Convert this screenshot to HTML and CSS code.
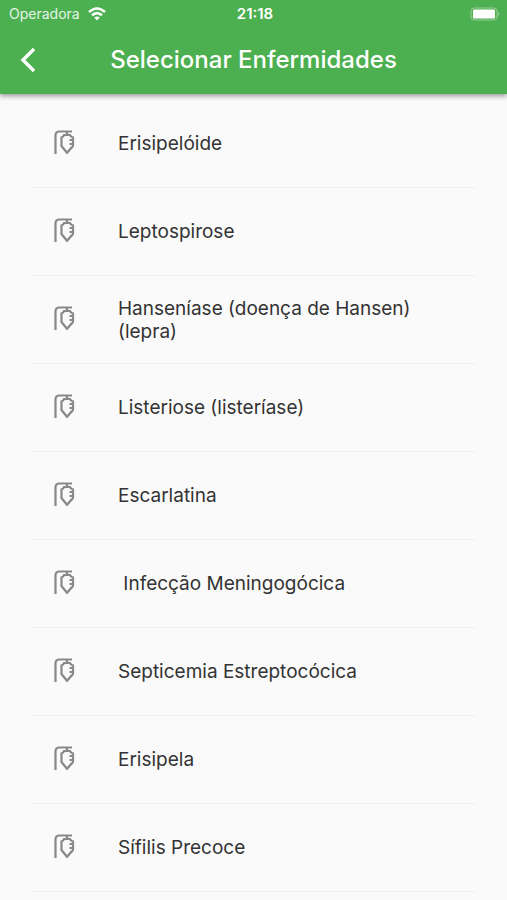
FILE: index.html
```html
<!DOCTYPE html>
<html lang="pt-BR">
<head>
<meta charset="utf-8">
<meta name="viewport" content="width=device-width, initial-scale=1">
<title>Selecionar Enfermidades</title>
<link rel="stylesheet" href="styles.css">
</head>
<body>
<svg class="sprite" aria-hidden="true">
  <symbol id="drip" viewBox="0 0 24 28">
    <path d="M3.500 24V5.500Q3.500 1.500 7.500 1.500H20M15 1.500V5"/>
    <path d="M12 5H18Q18.500 7 21 7.500V16L15 22.800L9.500 16V7.500Q11.500 7 12 5ZM21 10H17.500M21 14H17.500"/>
  </symbol>
</svg>
<header class="header">
  <div class="status">
    <div class="carrier">
      <span>Operadora</span>
      <svg class="wifi" viewBox="0 0 18 14" aria-hidden="true">
        <path d="M1 5Q9 -2 17 5M4 8.300Q9 4 14 8.300"/>
        <path class="wifi-dot" d="M6.200 10.500Q9 8.500 11.800 10.500L9 13.500Z"/>
      </svg>
    </div>
    <time class="clock">21:18</time>
    <svg class="battery" viewBox="0 0 31 14" aria-hidden="true">
      <rect class="battery-case" x="1" y="1" width="26" height="12" rx="3"/>
      <rect class="battery-fill" x="3" y="2.500" width="22" height="9" rx="1"/>
      <path class="battery-tip" d="M28 4.500Q30.500 7 28 9.500Z"/>
    </svg>
  </div>
  <div class="bar">
    <button class="back" type="button" aria-label="Voltar">
      <svg viewBox="0 0 16 26" aria-hidden="true"><path d="M14 2L3 13L14 24"/></svg>
    </button>
    <h1 class="title">Selecionar Enfermidades</h1>
  </div>
</header>
<main>
  <ul class="list">
    <li class="row"><svg class="icon" aria-hidden="true"><use href="#drip"/></svg><span>Erisipelóide</span></li>
    <li class="row"><svg class="icon" aria-hidden="true"><use href="#drip"/></svg><span>Leptospirose</span></li>
    <li class="row"><svg class="icon" aria-hidden="true"><use href="#drip"/></svg><span>Hanseníase (doença de Hansen) (lepra)</span></li>
    <li class="row"><svg class="icon" aria-hidden="true"><use href="#drip"/></svg><span>Listeriose (listeríase)</span></li>
    <li class="row"><svg class="icon" aria-hidden="true"><use href="#drip"/></svg><span>Escarlatina</span></li>
    <li class="row"><svg class="icon" aria-hidden="true"><use href="#drip"/></svg><span>&nbsp;Infecção Meningogócica</span></li>
    <li class="row"><svg class="icon" aria-hidden="true"><use href="#drip"/></svg><span>Septicemia Estreptocócica</span></li>
    <li class="row"><svg class="icon" aria-hidden="true"><use href="#drip"/></svg><span>Erisipela</span></li>
    <li class="row"><svg class="icon" aria-hidden="true"><use href="#drip"/></svg><span>Sífilis Precoce</span></li>
  </ul>
</main>
</body>
</html>
```
FILE: styles.css
```css
* { box-sizing: border-box; }
body {
  margin: 0;
  background: #fafafa;
  color: #333;
  font-family: Inter, "Liberation Sans", sans-serif;
}
.sprite { position: absolute; width: 0; height: 0; }
.header {
  background: #4caf50;
  color: #fff;
  box-shadow: 0 2px 5px rgba(0, 0, 0, 0.4);
}
.status {
  display: grid;
  grid-template-columns: 1fr auto 1fr;
  align-items: center;
  height: 27px;
  padding: 0 6px 0 9px;
  font-size: 14px;
}
.carrier { display: flex; align-items: center; gap: 8px; color: #e4f5e5; }
.wifi { width: 18px; height: 14px; fill: none; stroke: #fff; stroke-width: 2.5; }
.wifi .wifi-dot { fill: #fff; stroke: none; }
.clock { font-size: 15px; font-weight: 600; }
.battery { justify-self: end; width: 31px; height: 14px; }
.battery-case { fill: none; stroke: #94cf97; }
.battery-fill { fill: #fff; }
.battery-tip { fill: #94cf97; }
.bar {
  display: grid;
  grid-template-columns: 56px 1fr 56px;
  align-items: center;
  height: 67px;
  padding-bottom: 2px;
}
.back {
  height: 56px;
  padding: 0 0 0 20px;
  border: 0;
  background: none;
  text-align: left;
}
.back svg { display: block; width: 16px; height: 26px; fill: none; stroke: #fff; stroke-width: 3.5; }
.title { margin: 0; font-size: 24px; font-weight: 500; text-align: center; white-space: nowrap; }
.list { margin: 0; padding: 6px 30px 0 32px; list-style: none; }
.row {
  display: flex;
  align-items: center;
  gap: 42px;
  height: 88px;
  padding: 0 20px;
  border-bottom: 1px solid #f0f0f0;
  font-size: 19px;
  line-height: 23px;
}
.icon { flex: none; width: 24px; height: 28px; fill: none; stroke: #888; stroke-width: 2.2; }
```
